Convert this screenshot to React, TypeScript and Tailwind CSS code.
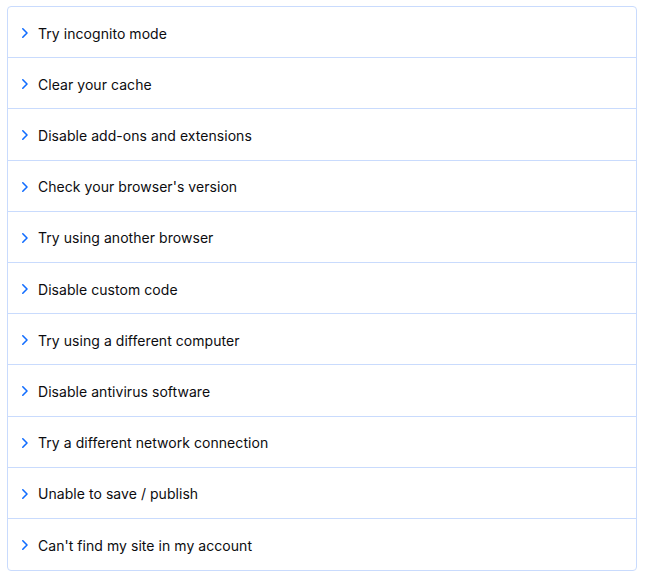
import React from "react";

const items = [
  "Try incognito mode",
  "Clear your cache",
  "Disable add-ons and extensions",
  "Check your browser's version",
  "Try using another browser",
  "Disable custom code",
  "Try using a different computer",
  "Disable antivirus software",
  "Try a different network connection",
  "Unable to save / publish",
  "Can't find my site in my account",
];

function Chevron() {
  return (
    <svg width="8" height="12" viewBox="0 0 8 12" fill="none" className="shrink-0">
      <path d="M1.8 1.8l4.2 4.2-4.2 4.2" stroke="#116dff" strokeWidth="1.6" strokeLinecap="round" strokeLinejoin="round" />
    </svg>
  );
}

export default function App() {
  return (
    <div className="bg-white w-[645px] h-[576px] pt-[6px] pl-[7px]" style={{ fontFamily: "Inter, 'Noto Sans', sans-serif" }}>
      <div className="w-[630px] rounded-[4px] border border-[#c9dbfd] bg-white">
        {items.map((t, i) => (
          <div
            key={t}
            className={`flex items-center h-[51.2px] pl-[13px] pt-[2px] gap-[9px] ${i < items.length - 1 ? "border-b border-[#c9dbfd]" : ""}`}
          >
            <Chevron />
            <span className="text-[14px] text-[#0c0c0f] tracking-[0.05px]">{t}</span>
          </div>
        ))}
      </div>
    </div>
  );
}
